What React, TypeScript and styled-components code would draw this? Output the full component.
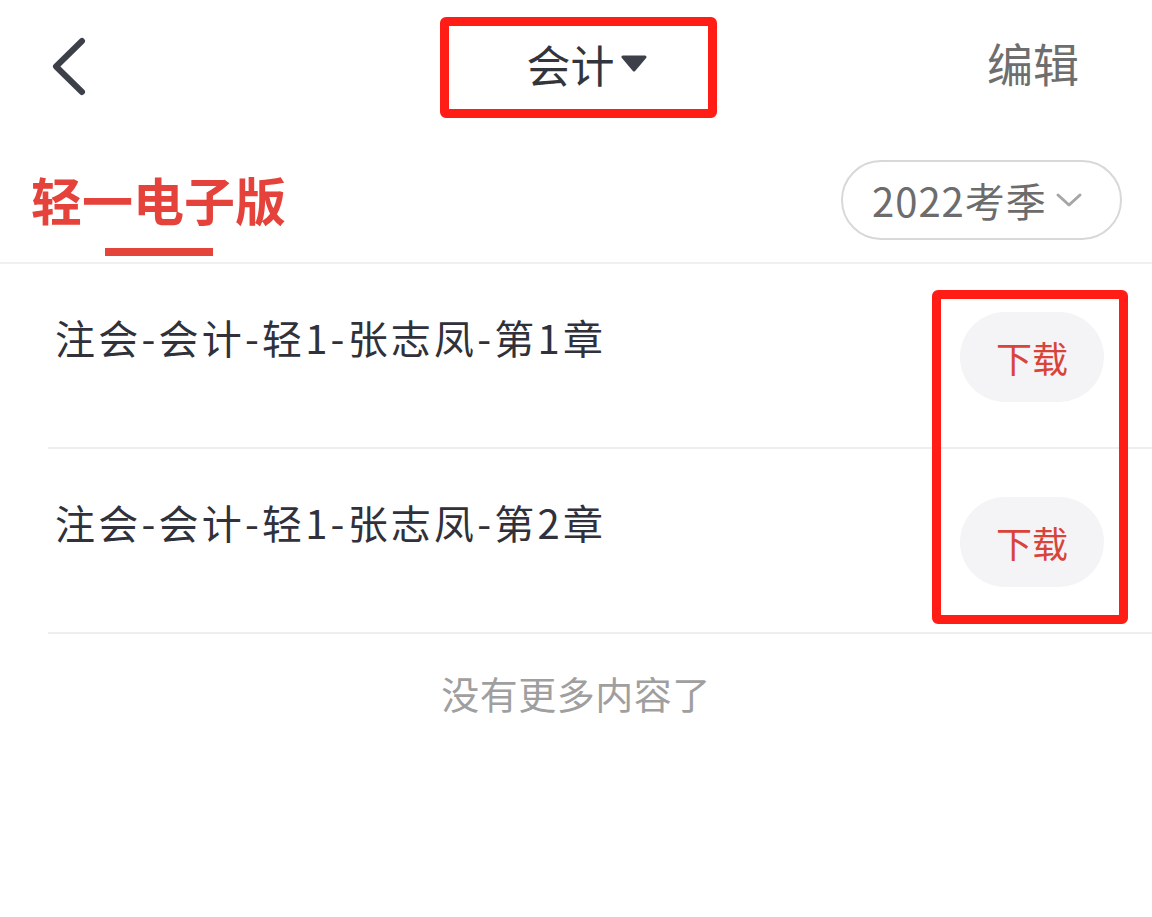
import React from "react";
import styled, { createGlobalStyle } from "styled-components";

const Global = createGlobalStyle`
  html, body { margin: 0; padding: 0; background: #ffffff; }
  body { font-family: "Noto Sans CJK SC", "Noto Sans", sans-serif; }
  * { box-sizing: border-box; }
`;

const Page = styled.div`
  width: 1152px;
  height: 917px;
  background: #fff;
  overflow: hidden;
`;

const Header = styled.header`
  height: 136px;
  display: grid;
  grid-template-columns: 1fr auto 1fr;
  align-items: start;
`;

const BackButton = styled.div`
  padding: 37px 0 0 51px;
  display: flex;
`;

const TitleBox = styled.div`
  margin-top: 17px;
  width: 277px;
  height: 101px;
  border: 9px solid #ff1d15;
  border-radius: 6px;
  display: flex;
  align-items: center;
  padding: 0 0 8px 78px;
  gap: 6px;
  transform: translateX(2px);
`;

const TitleText = styled.span`
  font-size: 44px;
  line-height: 1;
  color: #33353d;
`;

const EditLink = styled.div`
  justify-self: end;
  padding: 37px 73px 0 0;
  font-size: 46px;
  line-height: 1.1;
  color: #6e6e6e;
`;

const TabBar = styled.div`
  height: 128px;
  display: flex;
  justify-content: space-between;
  align-items: flex-start;
  border-bottom: 2px solid #f0f0f0;
  padding: 0 30px 0 31px;
`;

const Tab = styled.div`
  display: flex;
  flex-direction: column;
  align-items: center;
  padding-top: 35px;
`;

const TabLabel = styled.span`
  font-size: 51px;
  font-weight: 700;
  line-height: 1.1;
  color: #e4423a;
`;

const TabIndicator = styled.div`
  margin-top: 21px;
  width: 108px;
  height: 8px;
  background: #e4453b;
`;

const SeasonPill = styled.div`
  margin-top: 24px;
  width: 281px;
  height: 80px;
  border: 2px solid #d8d8d8;
  border-radius: 40px;
  display: flex;
  align-items: center;
  padding-left: 29px;
  gap: 8px;
  color: #6c6c6c;
  font-size: 40px;
  letter-spacing: 1px;
`;

const List = styled.div`
  position: relative;
`;

const Row = styled.div`
  margin-left: 48px;
  height: 185px;
  display: flex;
  justify-content: space-between;
  align-items: flex-start;
  padding: 0 48px 0 7px;
  border-bottom: 2px solid #eeeeee;
`;

const RowTitle = styled.span`
  margin-top: 51px;
  font-size: 40px;
  letter-spacing: 3.2px;
  line-height: 1.1;
  color: #30313a;
`;

const DownloadButton = styled.div`
  margin-top: 48px;
  width: 144px;
  height: 90px;
  border-radius: 45px;
  background: #f4f4f6;
  color: #d8443a;
  font-size: 36px;
  display: flex;
  align-items: center;
  justify-content: center;
`;

const Highlight = styled.div`
  position: absolute;
  top: 26px;
  right: 24px;
  width: 196px;
  height: 334px;
  border: 9px solid #ff1d15;
  border-radius: 6px;
  pointer-events: none;
`;

const Footer = styled.div`
  padding-top: 38px;
  text-align: center;
  font-size: 38px;
  letter-spacing: 0.5px;
  line-height: 1.1;
  color: #9f9f9f;
`;

const items = ["注会-会计-轻1-张志凤-第1章", "注会-会计-轻1-张志凤-第2章"];

export default function App() {
  return (
    <Page>
      <Global />
      <Header>
        <BackButton>
          <svg width="40" height="60" viewBox="0 0 40 60" fill="none">
            <path d="M31 4 L5 29.5 L31 55" stroke="#3d4049" strokeWidth="6" strokeLinecap="round" strokeLinejoin="round" />
          </svg>
        </BackButton>
        <TitleBox>
          <TitleText>会计</TitleText>
          <svg width="26" height="17" viewBox="0 0 26 17">
            <path d="M2 2 L24 2 L13 15 Z" fill="#3d4049" stroke="#3d4049" strokeWidth="3" strokeLinejoin="round" />
          </svg>
        </TitleBox>
        <EditLink>编辑</EditLink>
      </Header>
      <TabBar>
        <Tab>
          <TabLabel>轻一电子版</TabLabel>
          <TabIndicator />
        </Tab>
        <SeasonPill>
          <span>2022考季</span>
          <svg width="28" height="16" viewBox="0 0 28 16" fill="none">
            <path d="M3 3 L14 13 L25 3" stroke="#a6a6a6" strokeWidth="3" strokeLinecap="round" strokeLinejoin="round" />
          </svg>
        </SeasonPill>
      </TabBar>
      <List>
        {items.map((t) => (
          <Row key={t}>
            <RowTitle>{t}</RowTitle>
            <DownloadButton>下载</DownloadButton>
          </Row>
        ))}
        <Highlight />
      </List>
      <Footer>没有更多内容了</Footer>
    </Page>
  );
}
